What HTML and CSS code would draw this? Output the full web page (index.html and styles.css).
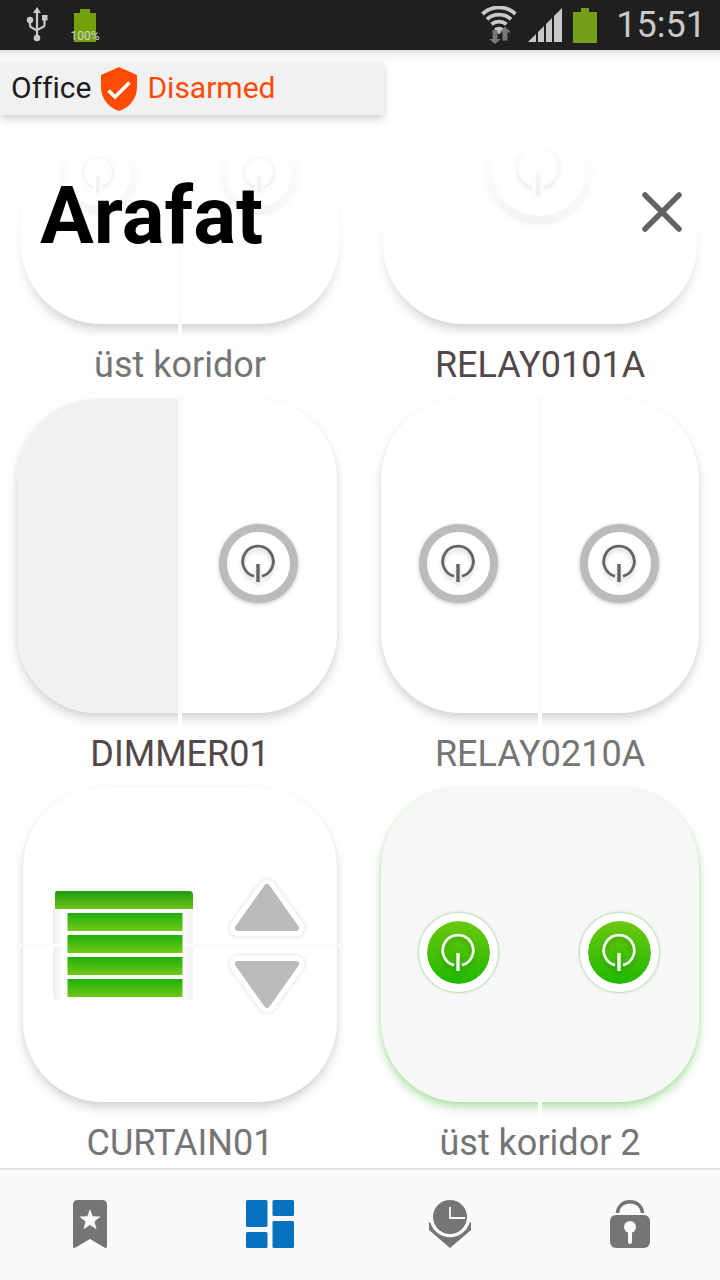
FILE: index.html
```html
<!DOCTYPE html>
<html lang="tr">
<head>
<meta charset="utf-8">
<meta name="viewport" content="width=device-width, initial-scale=1">
<title>Arafat</title>
<link rel="stylesheet" href="styles.css">
</head>
<body>
<svg class="defs" aria-hidden="true">
  <defs>
    <linearGradient id="slat" x1="0" y1="0" x2="0" y2="1"><stop offset="0" stop-color="#1fb00c"/><stop offset="1" stop-color="#70c814"/></linearGradient>
    <linearGradient id="rail" x1="0" y1="0" x2="0" y2="1"><stop offset="0" stop-color="#1c9a12"/><stop offset="1" stop-color="#6cc414"/></linearGradient>
    <linearGradient id="side" x1="0" y1="0" x2="1" y2="0"><stop offset="0" stop-color="#ededed"/><stop offset=".6" stop-color="#fbfbfb"/><stop offset="1" stop-color="#fff"/></linearGradient>
    <linearGradient id="side-r" x1="1" y1="0" x2="0" y2="0"><stop offset="0" stop-color="#f3f3f3"/><stop offset="1" stop-color="#fbfbfb"/></linearGradient>
    <symbol id="power" viewBox="0 0 36 40">
      <path d="M14 33.2A15.3 15.3 0 1 1 22 33.2" fill="none" stroke="currentColor" stroke-width="2.800"/>
      <path d="M18 21V39" stroke="currentColor" stroke-width="3.400"/>
    </symbol>
  </defs>
</svg>

<div class="status">
  <div class="status-group status-left">
    <svg width="22" height="36" viewBox="0 0 22 36" fill="#c9c9c9">
      <path d="M11 0l4 6H7z"/><circle cx="11" cy="31" r="3.3"/><circle cx="4" cy="13" r="3.2"/><path d="M16 8h5.500v5.500H16z"/>
      <path d="M11 4v27M4 13v5.500q0 1.500 1.500 2L11 23.500M18.500 12v6q0 1.500-1.500 2L11 23" fill="none" stroke="#c9c9c9" stroke-width="2.200"/>
    </svg>
    <div class="charge">
      <svg width="22" height="33" viewBox="0 0 22 33" fill="#73a00b"><path d="M0 4h6V0h10v4h6v29H0z"/></svg>
      <span class="charge-text">100%</span>
    </div>
  </div>
  <div class="status-group">
    <svg width="36" height="38" viewBox="0 0 36 38">
      <g fill="none" stroke="#c9c9c9" stroke-width="3.800"><path d="M1.500 8a24 24 0 0 1 33 0"/><path d="M6 13.300a18 18 0 0 1 24 0"/><path d="M10.500 18.300a12 12 0 0 1 15 0"/></g>
      <path d="M13 22.500q5-3.500 10 0l-5 6z" fill="#c9c9c9"/>
      <path d="M11.500 24h5v9h3.500l-6 5-6-5h3.500z" fill="#777"/><path d="M21.500 34.500v-8H18l6-6 6 6h-3.500v8z" fill="#777"/>
    </svg>
    <svg width="34" height="34" viewBox="0 0 34 34" fill="#c9c9c9"><path d="M0 34l8-8v8zM10 34V24l6-6v16zM18 34V16l6-6v24zM26 34V8l8-8v34z"/></svg>
    <svg width="24" height="35" viewBox="0 0 24 35" fill="#73a018"><path d="M0 4h8V0h8v4h8v31H0z"/></svg>
    <time class="clock">15:51</time>
  </div>
</div>

<main class="screen">
  <header class="top">
    <div class="alarm">
      <span>Office</span>
      <svg width="36" height="44" viewBox="0 0 36 44"><path d="M18 0L36 8v12c0 11-7.500 21-18 24C7.500 41 0 31 0 20V8z" fill="#ff4a05"/><path d="M7.500 23.500l6.500 6.500L28.500 15.500" fill="none" stroke="#fff" stroke-width="3.600"/></svg>
      <span class="alarm-state">Disarmed</span>
    </div>
    <div class="heading">
      <h1 class="title">Arafat</h1>
      <button class="close" aria-label="Close"><svg width="42" height="42" viewBox="0 0 42 42"><path d="M4 4l34 34M38 4L4 38" stroke="#636363" stroke-width="5.500" stroke-linecap="round"/></svg></button>
    </div>
  </header>

  <section class="grid">
    <article class="tile">
      <div class="card split">
        <div class="half"><button class="power" aria-label="üst koridor, left"><svg class="glyph"><use href="#power"/></svg></button></div>
        <div class="half"><button class="power" aria-label="üst koridor, right"><svg class="glyph"><use href="#power"/></svg></button></div>
      </div>
      <h2 class="name">üst koridor</h2>
    </article>
    <article class="tile">
      <div class="card single"><button class="power large" aria-label="RELAY0101A"><svg class="glyph"><use href="#power"/></svg></button></div>
      <h2 class="name strong">RELAY0101A</h2>
    </article>
    <article class="tile">
      <div class="card split dimmer">
        <div class="half level"></div>
        <div class="half"><button class="power" aria-label="DIMMER01"><svg class="glyph"><use href="#power"/></svg></button></div>
      </div>
      <h2 class="name strong">DIMMER01</h2>
    </article>
    <article class="tile">
      <div class="card split">
        <div class="half"><button class="power" aria-label="RELAY0210A, left"><svg class="glyph"><use href="#power"/></svg></button></div>
        <div class="half"><button class="power" aria-label="RELAY0210A, right"><svg class="glyph"><use href="#power"/></svg></button></div>
      </div>
      <h2 class="name">RELAY0210A</h2>
    </article>
    <article class="tile">
      <div class="card curtain">
        <svg class="shutter" width="140" height="110" viewBox="0 0 140 110">
          <path d="M0 18h14v92H4q-4 0-4-4z" fill="url(#side)"/><path d="M130 18h10v88q0 4-4 4h-6z" fill="url(#side-r)"/>
          <path d="M0 54h14v3H0zM130 54h10v3h-10z" fill="#fff"/>
          <path d="M2 3q0-2 2-2h132q4 0 4 4v14H2z" fill="url(#rail)"/>
          <g fill="url(#slat)"><rect x="14.500" y="23" width="115" height="18"/><rect x="14.500" y="45" width="115" height="18"/><rect x="14.500" y="67" width="115" height="18"/><rect x="14.500" y="89" width="115" height="18"/></g>
        </svg>
        <div class="arrows">
          <button class="arrow" aria-label="Open"><svg width="78" height="60" viewBox="0 0 78 60"><path d="M39 10L68 50H10z" class="arrow-rim"/><path d="M39 9L68 50H10z" class="arrow-fill"/></svg></button>
          <button class="arrow" aria-label="Close curtain"><svg width="78" height="60" viewBox="0 0 78 60"><path d="M39 50L68 10H10z" class="arrow-rim"/><path d="M39 51L68 10H10z" class="arrow-fill"/></svg></button>
        </div>
      </div>
      <h2 class="name">CURTAIN01</h2>
    </article>
    <article class="tile">
      <div class="card split on">
        <div class="half"><button class="power" aria-label="üst koridor 2, left" aria-pressed="true"><svg class="glyph"><use href="#power"/></svg></button></div>
        <div class="half"><button class="power" aria-label="üst koridor 2, right" aria-pressed="true"><svg class="glyph"><use href="#power"/></svg></button></div>
      </div>
      <h2 class="name">üst koridor 2</h2>
    </article>
  </section>
</main>

<nav class="tabs">
  <a class="tab" href="#favourites" aria-label="Favourites"><svg width="48" height="48" viewBox="0 0 48 48"><path d="M12 0h24q5 0 5 5v41q0 3-2.500 1.500L24 39 9.500 47.500Q7 49 7 46V5q0-5 5-5z" fill="#757575"/><path d="M24 9l2.700 7.200 8 .3-6.200 5 2 7.700L24 25l-6.500 4.200 2-7.700-6.200-5 8-.3z" fill="#fafafa"/></svg></a>
  <a class="tab" href="#rooms" aria-label="Rooms" aria-current="page"><svg width="48" height="48" viewBox="0 0 48 48" fill="#0671bf"><rect width="21.500" height="27" rx="1.500"/><rect x="26.500" width="21.500" height="16" rx="1.500"/><rect y="32" width="21.500" height="16" rx="1.500"/><rect x="26.500" y="21" width="21.500" height="27" rx="1.500"/></svg></a>
  <a class="tab" href="#schedule" aria-label="Schedule"><svg width="48" height="48" viewBox="0 0 48 48" fill="#757575"><circle cx="24" cy="17" r="17"/><path d="M24 7v11h15" fill="none" stroke="#fafafa" stroke-width="1.800"/><path d="M3 22l1.500 1A20.500 20.500 0 0 0 43.500 23l1.500-1v8L24 48 3 30z"/></svg></a>
  <a class="tab" href="#security" aria-label="Security"><svg width="48" height="48" viewBox="0 0 48 48"><path d="M11.500 13C12 6 17 1.700 24 1.700S36 6 36.500 13" fill="none" stroke="#757575" stroke-width="3.400"/><rect x="4" y="15" width="40" height="33" rx="6" fill="#757575"/><circle cx="24" cy="27" r="6" fill="#fafafa"/><path d="M24 28v14" stroke="#fafafa" stroke-width="4" stroke-linecap="round"/></svg></a>
</nav>
</body>
</html>
```
FILE: styles.css
```css
* { box-sizing: border-box; }

body {
  margin: 0;
  height: 100vh;
  display: flex;
  flex-direction: column;
  background: #fefefe;
  font-family: Roboto, "Liberation Sans", sans-serif;
}

svg { display: block; flex: none; }
button { padding: 0; border: 0; background: none; color: inherit; font: inherit; }
.defs { position: absolute; width: 0; height: 0; }

/* status bar */
.status {
  flex: none;
  height: 50px;
  padding: 0 14px 0 26px;
  display: flex;
  align-items: center;
  justify-content: space-between;
  background: #1f1f1f;
}
.status-group { display: flex; align-items: center; gap: 11px; }
.status-left { gap: 26px; }
.charge { position: relative; }
.charge-text {
  position: absolute;
  left: 50%;
  bottom: 0;
  transform: translateX(-50%);
  color: #d6d6d6;
  font-size: 12px;
  line-height: 12px;
}
.clock { margin-left: 8px; color: #c9c9c9; font-size: 36px; line-height: 50px; }

.screen {
  position: relative;
  flex: 1;
  min-height: 0;
  display: flex;
  flex-direction: column;
  justify-content: flex-end;
  overflow: hidden;
}
.top {
  position: absolute;
  inset: 0 0 auto;
  z-index: 2;
  height: 280px;
  padding-top: 12px;
  background:
    linear-gradient(rgba(0, 0, 0, .12), rgba(0, 0, 0, .03) 6px, transparent 16px),
    linear-gradient(#fff 90px, rgba(255, 255, 255, .93) 130px, rgba(255, 255, 255, .84) 170px, rgba(255, 255, 255, 0) 270px);
}
.alarm {
  width: fit-content;
  height: 53px;
  padding: 0 108px 0 11px;
  display: flex;
  align-items: center;
  gap: 10px;
  background: #f1f1f1;
  box-shadow: 0 4px 8px rgba(0, 0, 0, .18);
  color: #1c1c1c;
  font-size: 30px;
  line-height: 36px;
}
.alarm span { padding-bottom: 2px; }
.alarm-state { color: #ff4a05; }
.heading {
  margin-top: 50px;
  padding: 0 37px 0 40px;
  display: flex;
  align-items: flex-start;
  justify-content: space-between;
}
.title { margin: 0; color: #000; font-size: 80px; font-weight: 700; line-height: 102px; }
.close { margin-top: 26px; }

/* device tiles */
.grid {
  flex: none;
  display: grid;
  grid-template-columns: 1fr 1fr;
  gap: 10px 0;
  padding-bottom: 1px;
}
.tile { padding: 0 21px; }
.card {
  position: relative;
  height: 314px;
  border-radius: 80px;
  display: flex;
  background: #fff;
  box-shadow: 0 6px 10px rgba(0, 0, 0, .15), 0 1px 5px rgba(0, 0, 0, .03);
}
.half, .single {
  display: flex;
  align-items: center;
  justify-content: center;
  padding: 14px 2px 0 0;
}
.half { flex: 1; }
.split { gap: 4px; }
.split::before, .split::after {
  content: "";
  position: absolute;
  left: 50%;
  width: 4px;
  margin-left: -2px;
}
.split::before { top: 0; bottom: 0; background: #fafafa; }
.split::after { top: 100%; height: 16px; background: #fefefe; }
.single { margin: 0 2px; padding-top: 6px; }
.dimmer { margin: 0 2px 0 -4px; }
.dimmer::before, .dimmer::after { left: calc(50% + 3px); }
.half.level { flex: 0 0 calc(50% + 1px); background: #f1f1f1; border-radius: 80px 0 0 80px; }
.on {
  background: #f7f7f7;
  box-shadow: 0 6px 10px rgba(60, 180, 40, .3), 0 1px 5px rgba(60, 180, 40, .2);
}
.on::before { background: #f7f7f7; }

.power {
  width: 79px;
  height: 79px;
  border: 8px solid #bbb;
  border-radius: 50%;
  display: flex;
  align-items: center;
  justify-content: center;
  background: #fff;
  box-shadow: 0 1px 4px rgba(0, 0, 0, .25);
  color: #636363;
}
.glyph { width: 36px; height: 40px; margin-right: 2px; filter: drop-shadow(0 3px 2px rgba(0, 0, 0, .18)); }
.large { width: 108px; height: 108px; }
.large .glyph { width: 50px; height: 56px; }
.on .power {
  border-color: #fff;
  background: linear-gradient(#6cc80e, #1fb800) padding-box;
  box-shadow: 0 0 3px rgba(30, 150, 20, .7);
  color: #f4fff0;
}

.curtain {
  margin: 0 2px;
  padding: 0 31px 0 30px;
  align-items: center;
  justify-content: space-between;
}
.curtain::before {
  content: "";
  position: absolute;
  inset: 156px -8px auto;
  height: 3px;
  background: #fafafa;
}
.shutter { position: relative; }
.arrows { position: relative; padding-top: 2px; display: flex; flex-direction: column; gap: 16px; }
.arrow-rim {
  fill: #fff;
  stroke: #fff;
  stroke-width: 17px;
  stroke-linejoin: round;
  filter: drop-shadow(0 0 2px rgba(0, 0, 0, .16));
}
.arrow svg { overflow: visible; }
.arrow-fill { fill: #bbb; stroke: #bbb; stroke-width: 6px; stroke-linejoin: round; }

.name {
  margin: 17px 0 0;
  color: #757575;
  font-size: 36px;
  font-weight: 400;
  line-height: 48px;
  text-align: center;
}
.strong { color: #524848; }

/* bottom tabs */
.tabs {
  flex: none;
  height: 112px;
  padding-bottom: 2px;
  display: flex;
  background: #fafafa;
  border-top: 2px solid #e4e4e4;
}
.tab { flex: 1; display: flex; align-items: center; justify-content: center; }
```
